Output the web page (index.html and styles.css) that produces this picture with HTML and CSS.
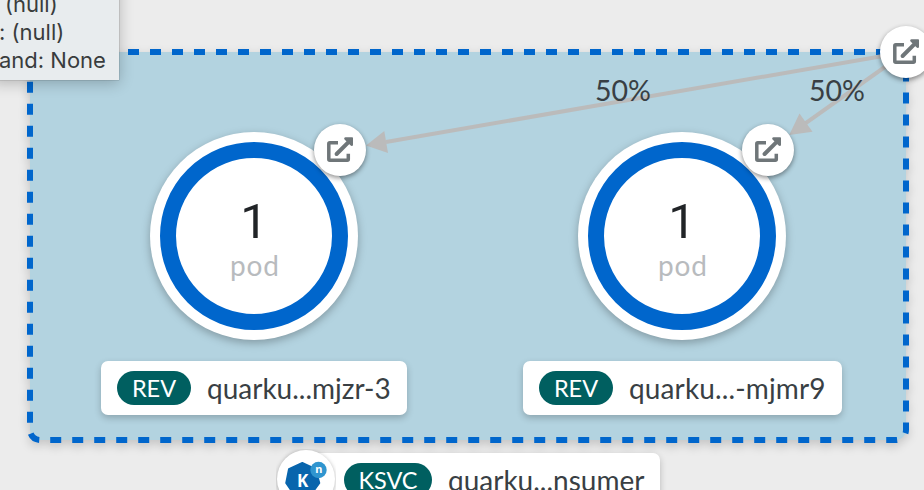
FILE: index.html
```html
<!DOCTYPE html>
<html lang="en">
<head>
<meta charset="utf-8">
<title>Topology</title>
<link rel="stylesheet" href="styles.css">
</head>
<body>
<main class="canvas">
  <svg class="graph" width="924" height="490" viewBox="0 0 924 490">
    <defs>
      <g id="open-url">
        <path class="icon-box" d="M-2-7.3H-10.2Q-11.2-7.3-11.2-6.3V9.3Q-11.2 10.3-10.2 10.3H7.3Q8.3 10.3 8.3 9.3V3.8"/>
        <path class="icon-shaft" d="M-3.4 4L9-8.4"/>
        <path class="icon-head" d="M5.5-12.8H12.2Q13-12.8 13-12V-5.2Q13-4 11.8-4Q11-4 10.4-4.8L4.8-10.2Q4-11 4.2-11.8Q4.5-12.8 5.5-12.8Z"/>
      </g>
    </defs>
    <rect class="group" x="30" y="52" width="876" height="388" rx="10"/>
    <g class="pod-node">
      <circle class="node-bg" cx="254" cy="236" r="104"/>
      <circle class="node-ring" cx="254" cy="236" r="86"/>
    </g>
    <g class="pod-node">
      <circle class="node-bg" cx="682" cy="236" r="104"/>
      <circle class="node-ring" cx="682" cy="236" r="86"/>
    </g>
    <g class="edges">
      <path class="edge" d="M906 52L386 142"/>
      <path class="arrow" d="M366 145.6L384.3 131L388 153Z"/>
      <path class="edge" d="M906 52L805 123.7"/>
      <path class="arrow" d="M789.2 135L799.5 113.5L812.5 131.7Z"/>
    </g>
    <circle class="decorator" cx="340" cy="150" r="26"/>
    <use href="#open-url" x="340" y="150"/>
    <circle class="decorator" cx="768" cy="150" r="26"/>
    <use href="#open-url" x="768" y="150"/>
    <circle class="decorator" cx="906" cy="52" r="26"/>
    <use href="#open-url" x="906" y="52"/>
    <g class="edge-labels">
      <text x="595" y="101" textLength="56" lengthAdjust="spacingAndGlyphs">50%</text>
      <text x="809" y="101" textLength="56" lengthAdjust="spacingAndGlyphs">50%</text>
    </g>
    <g class="pod-text">
      <text class="count" x="254" y="238">1</text>
      <text class="unit" x="230" y="276" textLength="49">pod</text>
      <text class="count" x="682" y="238">1</text>
      <text class="unit" x="658" y="276" textLength="49">pod</text>
    </g>
  </svg>

  <div class="label label-rev-3"><span class="badge">REV</span><span class="name">quarku...mjzr-3</span></div>
  <div class="label label-rev-9"><span class="badge">REV</span><span class="name">quarku...-mjmr9</span></div>
  <div class="label label-service"><span class="badge">KSVC</span><span class="name">quarku...nsumer</span></div>

  <svg class="service-icon" width="60" height="60" viewBox="0 0 60 60">
    <circle class="service-bg" cx="30" cy="30" r="29"/>
    <path class="service-hept" d="M26.3 13.7L39.8 20L43.5 34L34.5 46.5H18.5L10 34L12.8 20Z"/>
    <text class="service-k" x="21" y="37.5">K</text>
    <circle class="service-n-bg" cx="42.5" cy="21" r="8.2"/>
    <text class="service-n" x="39.2" y="24.3">n</text>
  </svg>

  <div class="tooltip">
    <p class="line line-first">(null)</p>
    <p class="line line-second">: (null)</p>
    <p class="line line-third">and: None</p>
  </div>
</main>
</body>
</html>
```
FILE: styles.css
```css
body {
  margin: 0;
  background: #ececec;
}

.canvas {
  position: relative;
  width: 924px;
  height: 490px;
  overflow: hidden;
  font-family: Lato, "Open Sans", sans-serif;
  color: #393f44;
}

.graph {
  display: block;
}

.group {
  fill: #b3d3e0;
  stroke: #06c;
  stroke-width: 6;
  stroke-dasharray: 11;
  filter: drop-shadow(0 4px 5px rgba(3, 3, 3, 0.16));
}

.node-bg {
  fill: #fff;
  filter: drop-shadow(0 3px 4px rgba(3, 3, 3, 0.28));
}

.node-ring {
  fill: none;
  stroke: #06c;
  stroke-width: 16;
}

.edge {
  stroke: #bbb;
  stroke-width: 4;
}

.arrow {
  fill: #bbb;
}

.decorator {
  fill: #fff;
  filter: drop-shadow(0 2px 2.5px rgba(3, 3, 3, 0.45));
}

.icon-box,
.icon-shaft {
  fill: none;
  stroke: #6f7679;
  stroke-width: 3.5;
}

.icon-shaft {
  stroke-width: 4;
  stroke-linecap: round;
}

.icon-head {
  fill: #6f7679;
}

.edge-labels {
  font-size: 28px;
  fill: #393f44;
}

.count {
  font-family: Roboto, sans-serif;
  font-size: 49px;
  text-anchor: middle;
  fill: #212427;
}

.unit {
  font-size: 28px;
  fill: #b8bbbe;
}

.label {
  position: absolute;
  box-sizing: border-box;
  display: flex;
  align-items: center;
  gap: 16px;
  height: 54px;
  padding: 0 16px;
  border-radius: 7px;
  background: #fff;
  box-shadow: 0 3px 7px rgba(3, 3, 3, 0.22);
  white-space: nowrap;
}

.label-rev-3 {
  left: 101px;
  top: 361px;
  width: 306px;
}

.label-rev-9 {
  left: 523px;
  top: 361px;
  width: 319px;
}

.label-rev-9 .name {
  letter-spacing: 0.13px;
}

.label-service {
  left: 288px;
  top: 453px;
  width: 372px;
  padding-left: 56px;
}

.badge {
  flex: none;
  width: 74px;
  height: 34px;
  border-radius: 17px;
  background: #005f60;
  color: #fff;
  font-size: 23.5px;
  line-height: 34px;
  text-align: center;
}

.label-service .badge {
  width: 88px;
}

.name {
  font-size: 28px;
  line-height: 54px;
}

.service-icon {
  position: absolute;
  left: 276px;
  top: 449px;
}

.service-bg {
  fill: #fff;
  filter: drop-shadow(0 1px 2px rgba(3, 3, 3, 0.3));
}

.service-hept {
  fill: #0865ad;
  stroke: #0865ad;
  stroke-width: 1.5;
  stroke-linejoin: round;
}

.service-n-bg {
  fill: #3095cf;
}

.service-k,
.service-n {
  font-family: "Noto Sans", sans-serif;
  font-weight: bold;
  font-size: 17px;
  fill: #fff;
}

.service-n {
  font-size: 11px;
}

.tooltip {
  position: absolute;
  left: -8px;
  top: -20px;
  box-sizing: border-box;
  width: 127px;
  height: 100px;
  padding: 10px 0 0 8px;
  background: #e8ecee;
  box-shadow: 0 3px 14px rgba(0, 0, 0, 0.24), 0 0 1px rgba(0, 0, 0, 0.5);
  font-family: Inter, sans-serif;
  font-size: 22px;
  color: #393c3d;
  white-space: nowrap;
}

.line {
  margin: 0;
  line-height: 28px;
}

.line-first {
  padding-left: 5px;
}

.line-second {
  margin-left: -1px;
}

.line-third {
  margin-left: -1px;
}
```
